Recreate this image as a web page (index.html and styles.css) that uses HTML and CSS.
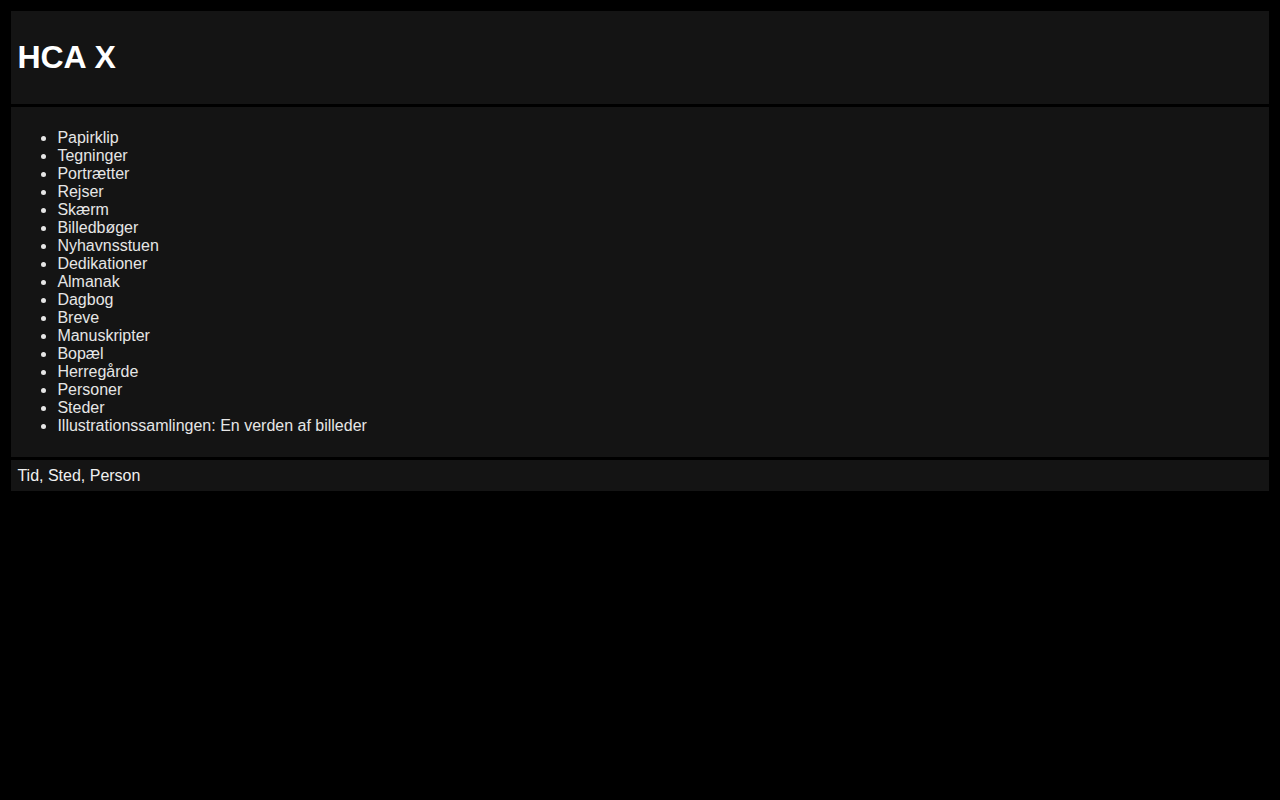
FILE: index.html
```html
<!DOCTYPE html>
<html lang="da">
<head>
<meta charset="utf-8">
<title>HCA X</title>
<link rel="stylesheet" href="styles.css">
</head>
<body>
<div class="page">
  <header class="box header">
    <h1 class="title">HCA X</h1>
  </header>
  <nav class="box nav">
    <ul class="menu">
      <li>Papirklip</li>
      <li>Tegninger</li>
      <li>Portrætter</li>
      <li>Rejser</li>
      <li>Skærm</li>
      <li>Billedbøger</li>
      <li>Nyhavnsstuen</li>
      <li>Dedikationer</li>
      <li>Almanak</li>
      <li>Dagbog</li>
      <li>Breve</li>
      <li>Manuskripter</li>
      <li>Bopæl</li>
      <li>Herregårde</li>
      <li>Personer</li>
      <li>Steder</li>
      <li>Illustrationssamlingen: En verden af billeder</li>
    </ul>
  </nav>
  <footer class="box footer">Tid, Sted, Person</footer>
</div>
</body>
</html>
```
FILE: styles.css
```css
html, body {
  margin: 0;
  padding: 0;
  background: #000;
}
body {
  font-family: "Liberation Sans", Arial, sans-serif;
  font-size: 16px;
  color: #e6e6e6;
}
.page {
  display: flex;
  flex-direction: column;
  gap: 3px;
  padding: 11px;
}
.box {
  background: #141414;
  padding: 6.4px;
}
.title {
  margin: 21.44px 0;
  font-size: 32px;
  font-weight: bold;
  color: #fff;
}
.menu {
  margin: 16px 0;
  padding-left: 40px;
}
.footer {
  color: #f0f0f0;
}
```
